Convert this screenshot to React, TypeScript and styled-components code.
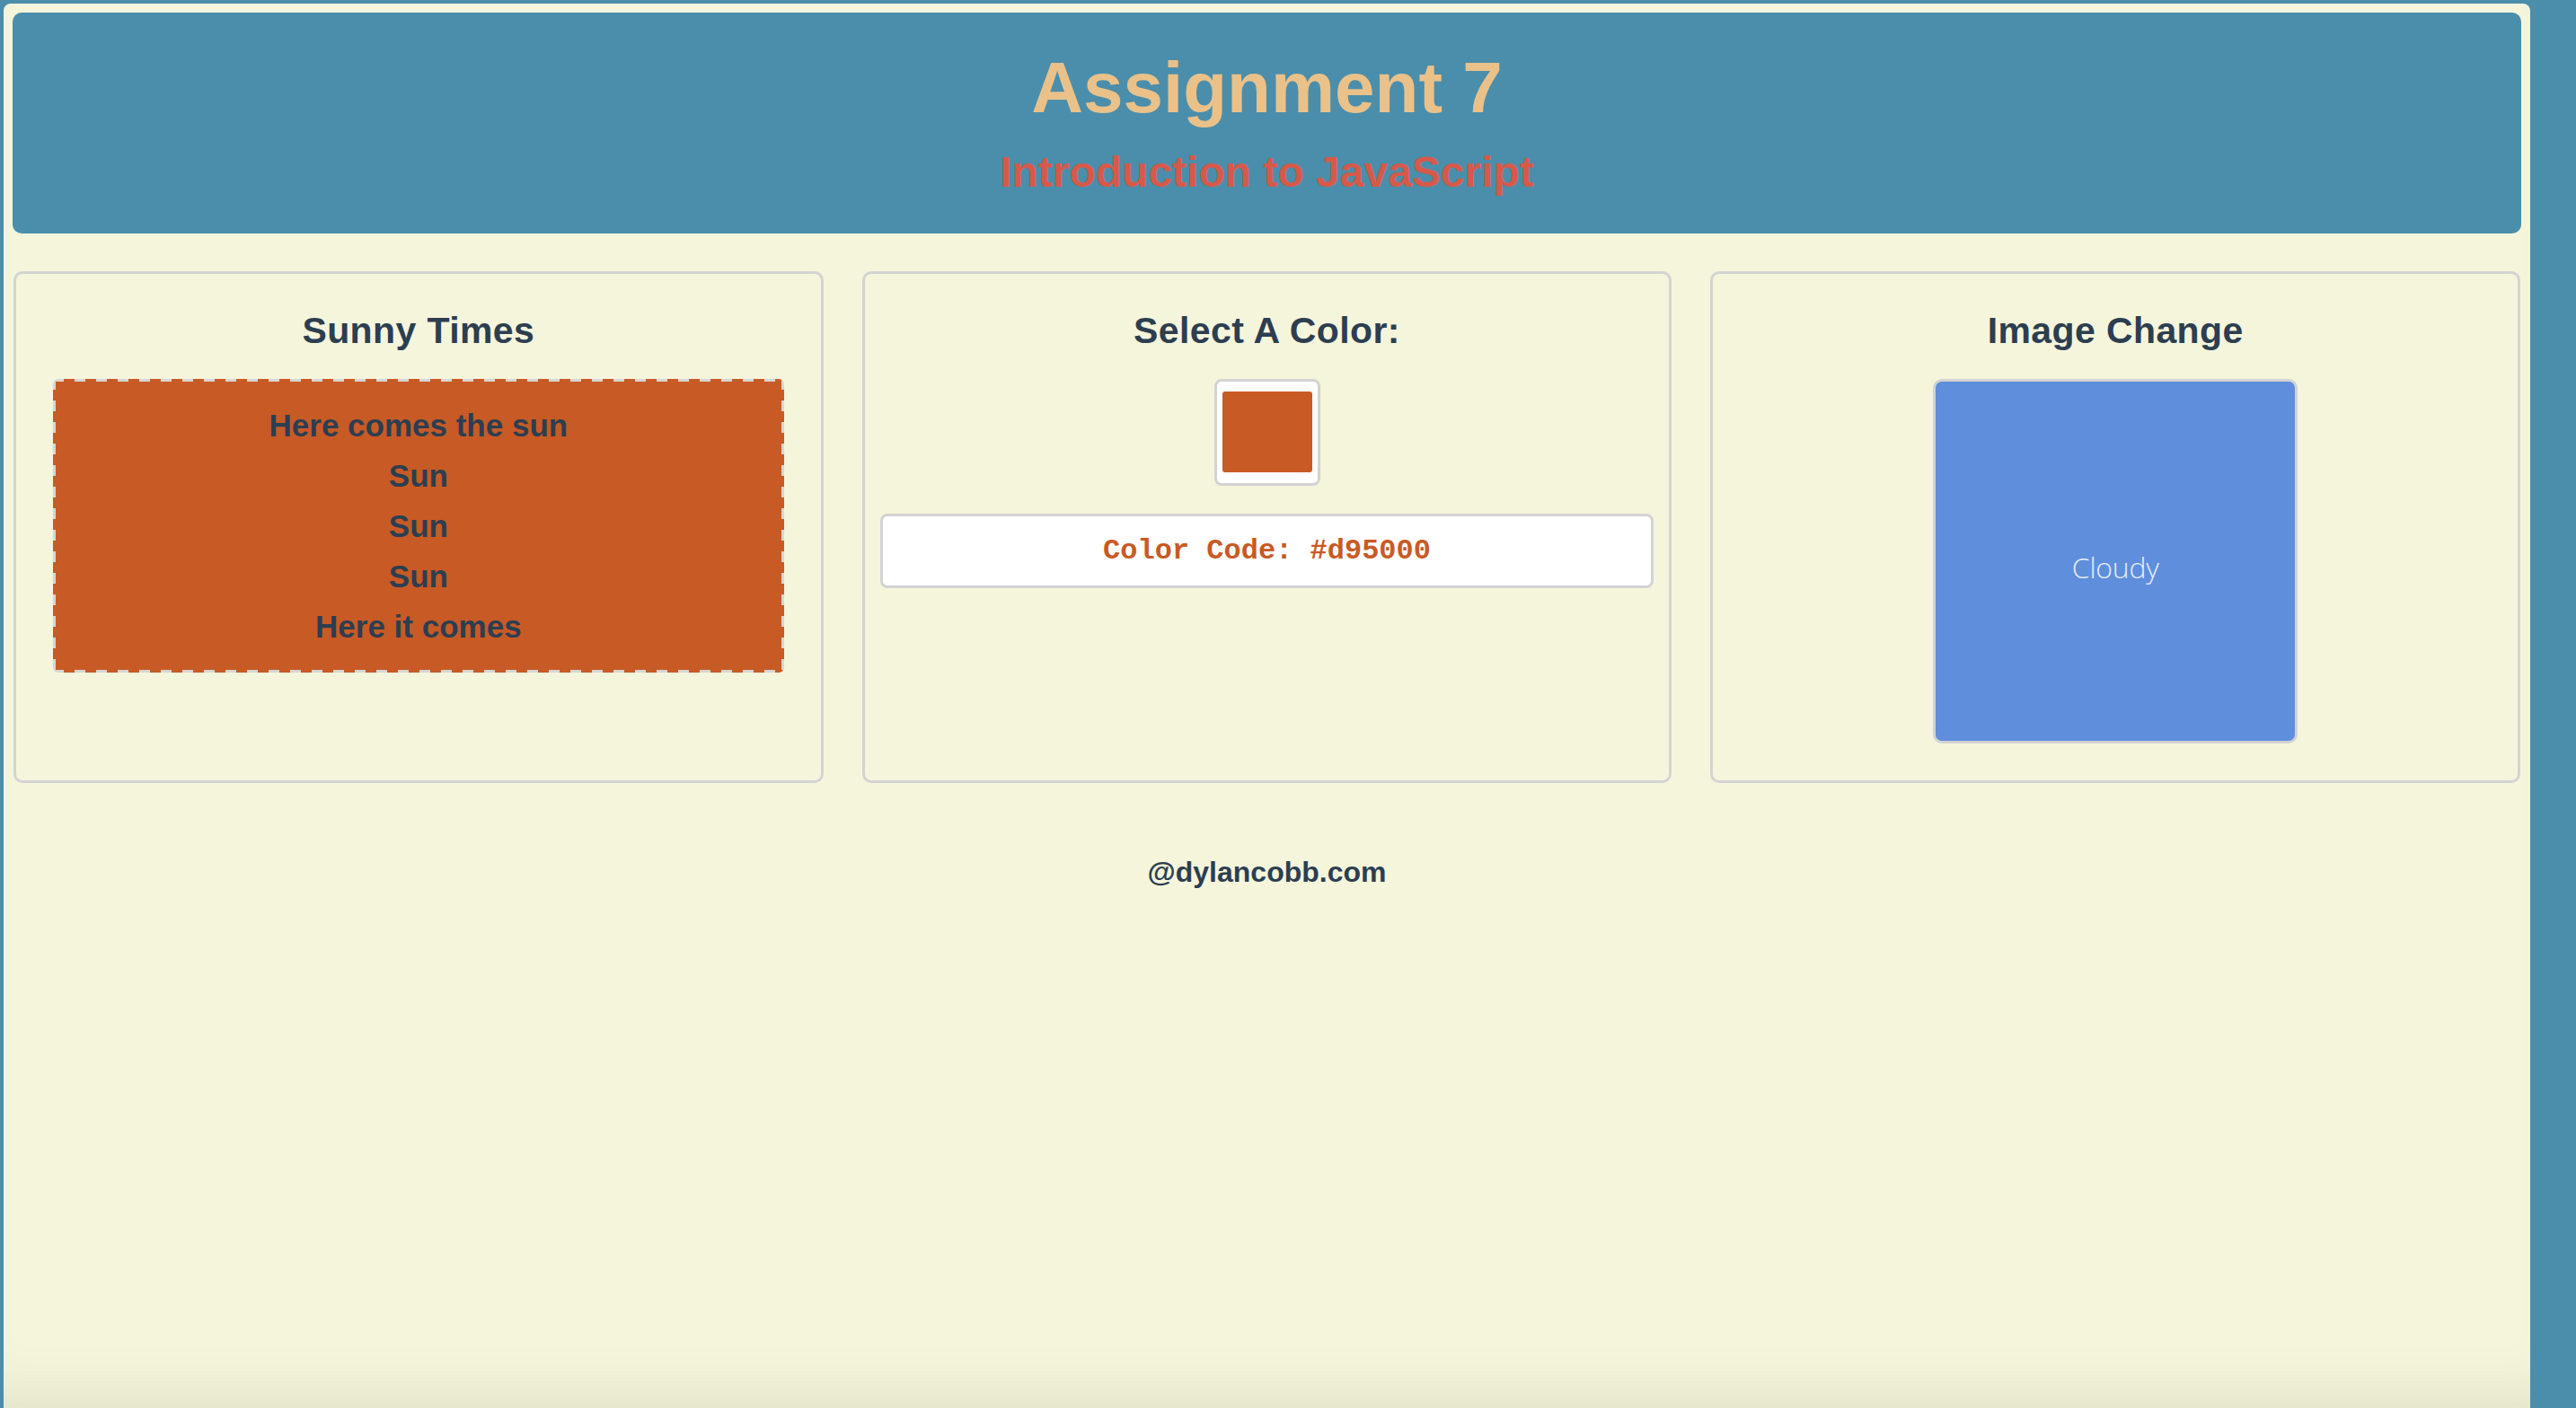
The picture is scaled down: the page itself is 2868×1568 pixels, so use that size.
import React from "react";
import styled, { createGlobalStyle } from "styled-components";

const GlobalStyle = createGlobalStyle`
  html, body {
    margin: 0;
    padding: 0;
    background: #4b8eab;
  }
  body {
    font-family: "Liberation Sans", Arial, Helvetica, sans-serif;
    overflow: hidden;
  }
  * { box-sizing: border-box; }
`;

const Page = styled.div`
  margin: 4px 51px 0 4px;
  padding: 10px;
  min-height: calc(100vh - 4px);
  background: #f5f5dc;
  border-radius: 8px 8px 0 0;
  box-shadow: inset 0 -60px 60px -45px rgba(60, 60, 20, 0.1);
`;

const Header = styled.header`
  background: #4b8eab;
  border-radius: 10px;
  padding: 38px 0 41px;
  text-align: center;
`;

const Title = styled.h1`
  margin: 0 0 20px;
  font-size: 80px;
  line-height: 92px;
  font-weight: 700;
  color: #eac189;
`;

const Subtitle = styled.h2`
  margin: 0;
  font-size: 48px;
  line-height: 55px;
  font-weight: 700;
  color: #d6594a;
`;

const CardRow = styled.main`
  display: flex;
  gap: 43px;
  margin-top: 42px;
  padding: 0 1px;
`;

const Card = styled.section`
  flex: 1 1 0;
  display: flex;
  flex-direction: column;
  align-items: stretch;
  border: 3px solid #d3d3d3;
  border-radius: 10px;
  padding: 40px 17px 41px;
  text-align: center;
`;

const CardTitle = styled.h3`
  margin: 0 0 31px;
  font-size: 41px;
  line-height: 46px;
  letter-spacing: 0.4px;
  font-weight: 700;
  color: #2c3e50;
`;

const dash = "#d6d6d2";

const SunBox = styled.div`
  margin: 0 24px;
  padding: 24px 3px 23px;
  border-radius: 6px;
  background:
    repeating-linear-gradient(90deg, ${dash} 0 12px, transparent 12px 24px) top left / 100% 3px no-repeat,
    repeating-linear-gradient(90deg, ${dash} 0 12px, transparent 12px 24px) bottom left / 100% 3px no-repeat,
    repeating-linear-gradient(180deg, ${dash} 0 12px, transparent 12px 24px) top left / 3px 100% no-repeat,
    repeating-linear-gradient(180deg, ${dash} 0 12px, transparent 12px 24px) top right / 3px 100% no-repeat,
    #c85a25;
`;

const SunLine = styled.p`
  margin: 0;
  font-size: 35px;
  line-height: 56px;
  font-weight: 700;
  color: #2c3e50;
`;

const SwatchFrame = styled.label`
  align-self: center;
  width: 118px;
  height: 119px;
  padding: 11px 6px 12px;
  background: #ffffff;
  border: 3px solid #d3d3d3;
  border-radius: 8px;
  display: flex;
`;

const Swatch = styled.span<{ $color: string }>`
  flex: 1;
  background: ${(p) => p.$color};
  border-radius: 3px;
`;

const CodeBox = styled.div`
  margin-top: 31px;
  height: 83px;
  background: #ffffff;
  border: 3px solid #d3d3d3;
  border-radius: 8px;
  display: flex;
  align-items: center;
  justify-content: center;
  font-family: "Liberation Mono", "Courier New", monospace;
  font-weight: 700;
  font-size: 32px;
  color: #c85a25;
`;

const WeatherImage = styled.div`
  align-self: center;
  width: 406px;
  height: 406px;
  border: 3px solid #d3d3d3;
  border-radius: 10px;
  background: #5e8edc;
  display: flex;
  align-items: center;
  justify-content: center;
  padding-top: 12px;
  font-family: "Open Sans", "Noto Sans", sans-serif;
  font-weight: 300;
  font-size: 32px;
  letter-spacing: -0.3px;
  color: #e6ecf8;
`;

const Footer = styled.footer`
  margin-top: 81px;
  text-align: center;
  font-size: 32px;
  line-height: 37px;
  font-weight: 700;
  color: #2c3e50;
`;

const lines = ["Here comes the sun", "Sun", "Sun", "Sun", "Here it comes"];

export default function App() {
  return (
    <>
      <GlobalStyle />
      <Page>
        <Header>
          <Title>Assignment 7</Title>
          <Subtitle>Introduction to JavaScript</Subtitle>
        </Header>
        <CardRow>
          <Card>
            <CardTitle>Sunny Times</CardTitle>
            <SunBox>
              {lines.map((l, i) => (
                <SunLine key={i}>{l}</SunLine>
              ))}
            </SunBox>
          </Card>
          <Card>
            <CardTitle>Select A Color:</CardTitle>
            <SwatchFrame>
              <Swatch $color="#c85a25" />
            </SwatchFrame>
            <CodeBox>Color Code: #d95000</CodeBox>
          </Card>
          <Card>
            <CardTitle>Image Change</CardTitle>
            <WeatherImage>Cloudy</WeatherImage>
          </Card>
        </CardRow>
        <Footer>@dylancobb.com</Footer>
      </Page>
    </>
  );
}
